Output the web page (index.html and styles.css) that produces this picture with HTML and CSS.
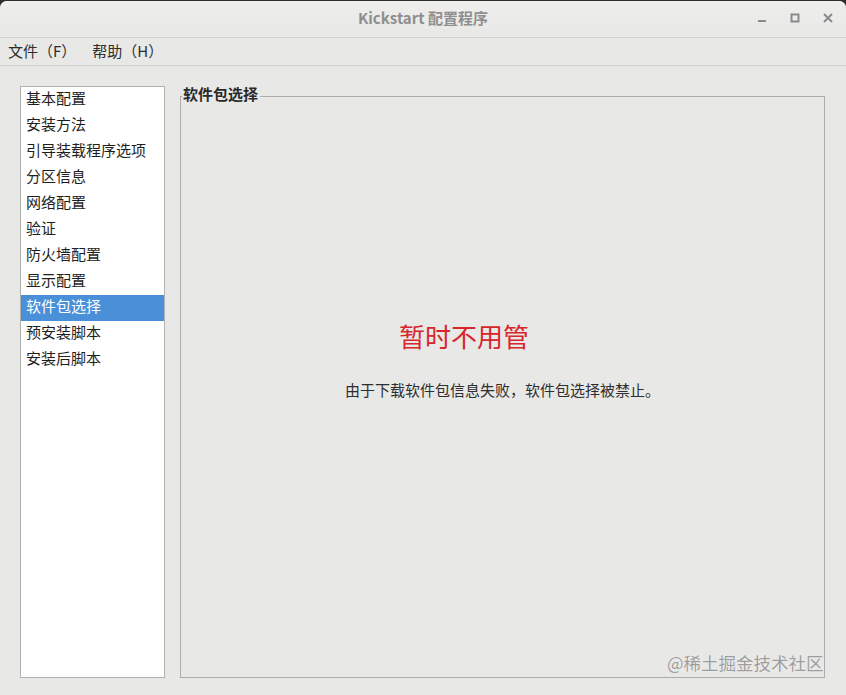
FILE: index.html
```html
<!DOCTYPE html>
<html lang="zh-CN">
  <head>
    <meta charset="UTF-8" />
    <title>Kickstart 配置程序</title>
    <link rel="stylesheet" href="styles.css">
  </head>
  <body>
    <div class="window">
      <!-- Title bar -->
      <div class="titlebar">
        <span class="title">Kickstart 配置程序</span>
        <div class="controls">
          <svg width="14" height="14" viewBox="0 0 14 14"><rect x="3" y="9" width="8" height="2" fill="#8b8b8b"/></svg>
          <svg width="14" height="14" viewBox="0 0 14 14"><rect x="3.5" y="3.5" width="7" height="7" fill="none" stroke="#8b8b8b" stroke-width="2"/></svg>
          <svg width="14" height="14" viewBox="0 0 14 14"><path d="M3 3 L11 11 M11 3 L3 11" stroke="#8b8b8b" stroke-width="2"/></svg>
        </div>
      </div>

      <!-- Menu bar -->
      <div class="menubar">
        <span class="menu-item">文件（F）</span>
        <span class="menu-item">帮助（H）</span>
      </div>

      <!-- Main area -->
      <div class="main">
        <ul class="nav-list">
          <li>基本配置</li>
          <li>安装方法</li>
          <li>引导装载程序选项</li>
          <li>分区信息</li>
          <li>网络配置</li>
          <li>验证</li>
          <li>防火墙配置</li>
          <li>显示配置</li>
          <li class="selected">软件包选择</li>
          <li>预安装脚本</li>
          <li>安装后脚本</li>
        </ul>

        <fieldset class="panel">
          <legend><span>软件包选择</span></legend>
          <p class="message">由于下载软件包信息失败，软件包选择被禁止。</p>
        </fieldset>
      </div>

      <div class="note">暂时不用管</div>
      <div class="watermark">@稀土掘金技术社区</div>
    </div>
  </body>
</html>
```

FILE: styles.css
```css
/* Kickstart config window */
body {
  margin: 0;
  background-color: #2e2e2e;
  font-family: "Noto Sans CJK SC", "DejaVu Sans", sans-serif;
  overflow: hidden;
}

.window {
  position: relative;
  width: 846px;
  height: 694px;
  margin-top: 1px;
  background-color: #e8e8e7;
  border-radius: 7px 7px 0 0;
  display: flex;
  flex-direction: column;
}

/* Title bar */
.titlebar {
  height: 36px;
  border-bottom: 1px solid #d2d2d0;
  display: flex;
  align-items: center;
  justify-content: center;
  position: relative;
  background: linear-gradient(to bottom, #eeeeed, #e8e8e7);
  border-radius: 7px 7px 0 0;
}

.title {
  font-size: 15px;
  font-weight: bold;
  color: #8f8f8f;
  margin-top: -3px;
}

.controls {
  position: absolute;
  right: 11px;
  top: 10px;
  display: flex;
  gap: 19px;
}

/* Menu bar */
.menubar {
  height: 27px;
  border-bottom: 1px solid #d2d2d0;
  display: flex;
  align-items: center;
  padding-left: 8px;
  gap: 16px;
}

.menu-item {
  font-size: 15px;
  color: #2e2e2e;
  margin-top: -3px;
}

/* Main area */
.main {
  flex: 1;
  display: flex;
  gap: 15px;
  padding: 20px 21px 17px 20px;
}

.nav-list {
  list-style: none;
  margin: 0;
  padding: 0;
  width: 143px;
  background-color: #fff;
  border: 1px solid #b0b0ae;
}

.nav-list li {
  box-sizing: border-box;
  height: 26px;
  line-height: 22px;
  padding: 0 0 4px 5px;
  font-size: 15px;
  color: #1e1e1e;
}

.nav-list li.selected {
  background-color: #4a90d9;
  color: #fff;
}

.panel {
  flex: 1;
  margin: 0;
  padding: 0;
  border: 1px solid #adadab;
  display: flex;
  align-items: center;
  justify-content: center;
  min-width: 0;
}

.panel legend {
  font-size: 15px;
  font-weight: bold;
  color: #2a2a2a;
  padding: 0 2px 0 1px;
  margin-left: 1px;
  line-height: 20px;
}

.panel legend span {
  position: relative;
  top: -2px;
}

.message {
  margin: 0;
  font-size: 15px;
  color: #2e2e2e;
  transform: translateY(-2px);
}

/* Overlays */
.note {
  position: absolute;
  left: 399px;
  top: 316px;
  font-size: 26px;
  color: #d7262c;
}

.watermark {
  position: absolute;
  left: 667px;
  top: 649px;
  font-size: 17.5px;
  color: #9c9c9c;
  text-shadow: 0 0 1px #fff;
}
```
